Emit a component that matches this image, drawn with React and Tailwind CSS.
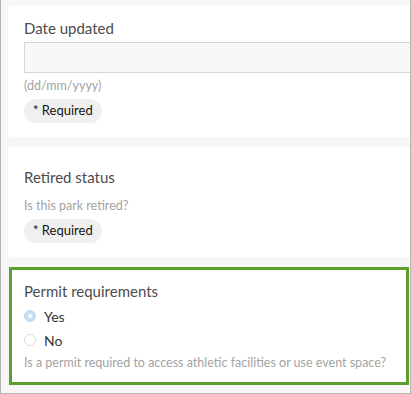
const font = { fontFamily: 'Lato, "Noto Sans", sans-serif' };

const Pill = () => (
    <div className="inline-flex items-center h-[24px] px-[9px] rounded-full bg-[#f0f0f0] text-[13px] text-[#151515]">
        * Required
    </div>
);

const Radio = ({ checked, label }) => (
    <div className="flex items-center h-[24px]">
        {checked ? (
            <span className="w-[12px] h-[12px] rounded-full bg-[#c5dff2] border border-[#b9d7ee] flex items-center justify-center">
                <span className="w-[4px] h-[4px] rounded-full bg-white"></span>
            </span>
        ) : (
            <span className="w-[12px] h-[12px] rounded-full bg-white border border-[#dcdcdc]"></span>
        )}
        <span className="ml-[8px] text-[14px] text-[#353535]">{label}</span>
    </div>
);

export default function App() {
    return (
        <div style={font} className="w-[411px] h-[394px] bg-[#f7f7f7] border-l border-r border-b border-[#b3b3b3] pt-[6px] pl-[7px] flex flex-col overflow-hidden">
            <div className="bg-white h-[131px] rounded-l-[3px] pl-4 pt-[12px] shrink-0">
                <div className="text-[15px] leading-[20px] text-[#4c4c4c]">Date updated</div>
                <div className="mt-[4px] h-[31px] bg-[#f8f8f8] border border-r-0 border-[#d6d6d6]"></div>
                <div className="mt-[4px] text-[12.5px] leading-[18px] text-[#a3a3a3]">(dd/mm/yyyy)</div>
                <div className="mt-[2px]"><Pill /></div>
            </div>
            <div className="bg-white h-[110px] mt-[10px] rounded-l-[3px] pl-4 pt-[20px] shrink-0">
                <div className="text-[15px] leading-[20px] text-[#4c4c4c]">Retired status</div>
                <div className="mt-[10px] text-[12.5px] leading-[18px] text-[#a3a3a3]">Is this park retired?</div>
                <div className="mt-[2px]"><Pill /></div>
            </div>
            <div className="bg-white h-[118px] mt-[10px] ml-[1px] mr-[1px] border-[3px] border-[#5e9f2c] pl-[12px] pt-[11px] shrink-0">
                <div className="text-[15px] leading-[20px] text-[#4c4c4c]">Permit requirements</div>
                <div className="mt-[3px]">
                    <Radio checked label="Yes" />
                    <Radio label="No" />
                </div>
                <div className="mt-[2px] text-[12.5px] leading-[18px] text-[#a3a3a3]">
                    Is a permit required to access athletic facilities or use event space?
                </div>
            </div>
        </div>
    );
}
